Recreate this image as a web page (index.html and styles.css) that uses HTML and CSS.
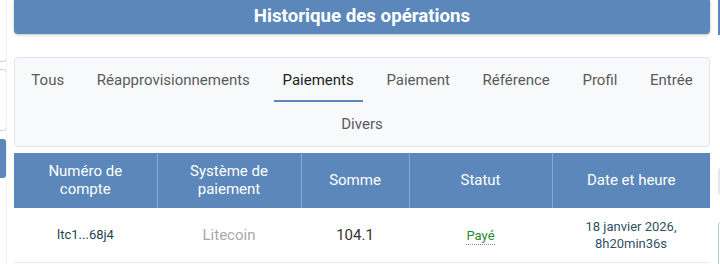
FILE: index.html
```html
<!DOCTYPE html>
<html lang="fr">
<head>
<meta charset="utf-8">
<title>Historique des opérations</title>
<link rel="stylesheet" href="styles.css">
</head>
<body>
<div class="page">
  <aside class="side-left">
    <div class="side-box"></div>
    <div class="side-box"></div>
    <div class="side-btn"></div>
    <div class="side-rest"></div>
  </aside>
  <main class="main">
    <header class="title-bar"><h1>Historique des opérations</h1></header>
    <nav class="tabs-card">
      <ul class="tabs">
        <li class="tab">Tous</li>
        <li class="tab">Réapprovisionnements</li>
        <li class="tab active">Paiements</li>
        <li class="tab">Paiement</li>
        <li class="tab">Référence</li>
        <li class="tab">Profil</li>
        <li class="tab">Entrée</li>
        <li class="tab">Divers</li>
      </ul>
    </nav>
    <table class="ops">
      <colgroup>
        <col class="c1"><col class="c2"><col class="c3"><col class="c4"><col class="c5">
      </colgroup>
      <thead>
        <tr>
          <th>Numéro de<br>compte</th>
          <th>Système de<br>paiement</th>
          <th>Somme</th>
          <th>Statut</th>
          <th>Date et heure</th>
        </tr>
      </thead>
      <tbody>
        <tr>
          <td class="acc">ltc1...68j4</td>
          <td class="sys">Litecoin</td>
          <td class="sum">104.1</td>
          <td><span class="paid">Payé</span></td>
          <td class="date">18 janvier 2026,<br>8h20min36s</td>
        </tr>
      </tbody>
    </table>
  </main>
  <aside class="side-right">
    <div class="r-top"></div>
    <div class="r-grey"></div>
    <div class="r-box"></div>
  </aside>
</div>
</body>
</html>
```
FILE: styles.css
```css
* { box-sizing: border-box; }
html, body { margin: 0; padding: 0; background: #fff; }
body { font-family: Roboto, "Noto Sans", "Liberation Sans", sans-serif; overflow: hidden; }

.page {
  display: flex;
  align-items: flex-start;
  width: 720px;
  height: 264px;
  overflow: hidden;
}

.side-left {
  width: 7px;
  flex: none;
  height: 264px;
  overflow: hidden;
  display: flex;
  flex-direction: column;
  align-items: flex-end;
  border-right: 1px solid #eef0f3;
}
.side-box {
  flex: none;
  width: 100px;
  height: 62px;
  margin-bottom: 7px;
  margin-right: -1px;
  border: 1px solid #c9d2dc;
  border-radius: 4px;
  background: #fff;
}
.side-box:first-child { margin-top: -5px; height: 67px; }
.side-btn {
  flex: none;
  width: 100px;
  height: 39px;
  margin-top: 1px;
  background: #5b87ba;
  border-radius: 3px;
}

.main {
  flex: none;
  width: 696px;
  margin-left: 7px;
}

.title-bar {
  height: 34px;
  background: #5b87ba;
  border-radius: 0 0 4px 4px;
  box-shadow: 0 1px 3px rgba(0, 0, 0, 0.25);
  display: flex;
  align-items: center;
  justify-content: center;
}
.title-bar h1 {
  margin: 0;
  color: #fff;
  font-size: 18.7px;
  font-weight: 700;
  line-height: 22px;
  padding-bottom: 2px;
}

.tabs-card {
  margin-top: 23px;
  background: #f8f9fb;
  border: 1px solid #e1e5eb;
  border-radius: 4px;
}
.tabs {
  list-style: none;
  margin: 0;
  padding: 0;
  display: flex;
  flex-wrap: wrap;
  justify-content: center;
  column-gap: 14.7px;
}
.tab {
  height: 44px;
  line-height: 44px;
  padding: 0 9px;
  font-size: 15px;
  color: #5a5a5a;
  white-space: nowrap;
}
.tab.active {
  color: #222;
  border-bottom: 2px solid #5b87ba;
}

.ops {
  margin-top: 6px;
  width: 696px;
  border-collapse: collapse;
  table-layout: fixed;
}
.c1 { width: 143px; }
.c2 { width: 144px; }
.c3 { width: 108px; }
.c4 { width: 143px; }
.c5 { width: 158px; }

.ops th {
  height: 55px;
  background: #5b87ba;
  color: #fff;
  font-weight: 400;
  font-size: 15px;
  line-height: 18px;
  text-align: center;
  vertical-align: middle;
  padding: 0 6px 1px;
  border-left: 1px solid rgba(255, 255, 255, 0.28);
}
.ops th:first-child { border-left: none; }

.ops td {
  height: 54px;
  text-align: center;
  vertical-align: middle;
  padding: 0 6px;
  border-bottom: 1px solid #e6e9ee;
  color: #333;
  font-size: 15px;
}
.ops td.acc { font-size: 13px; color: #24474f; }
.ops td.sys { color: #a9a9a9; }
.ops td.sum { color: #333; }
.ops td.date { font-size: 13px; line-height: 17px; color: #2f5262; }
.paid {
  font-size: 13px;
  color: #2b8a2b;
  border-bottom: 1px dotted #8a8a8a;
  padding-bottom: 1px;
}

.side-right {
  flex: none;
  width: 20px;
  margin-left: 8px;
  display: flex;
  flex-direction: column;
}
.r-top {
  height: 35px;
  border-left: 2px solid #5b87ba;
  background: #fff;
}
.r-grey {
  margin-top: 133px;
  height: 27px;
  background: #e3e6ea;
  border-radius: 3px;
}
.r-box {
  margin-top: 27px;
  height: 60px;
  border: 1px solid #b9c9dc;
  border-radius: 3px;
}
```
